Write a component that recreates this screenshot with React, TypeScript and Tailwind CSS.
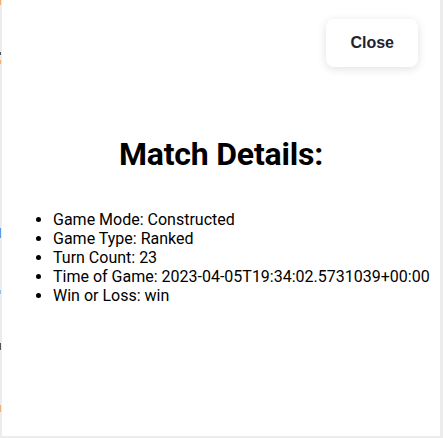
const details = [
  ['Game Mode', 'Constructed'],
  ['Game Type', 'Ranked'],
  ['Turn Count', '23'],
  ['Time of Game', '2023-04-05T19:34:02.5731039+00:00'],
  ['Win or Loss', 'win'],
];

// bits of the page behind the modal that peek out on the left edge
const peeks = [
  { top: 0, h: 5, color: 'bg-[#f0b070]' },
  { top: 52, h: 3, color: 'bg-[#555]' },
  { top: 60, h: 4, color: 'bg-[#f0b070]' },
  { top: 228, h: 10, color: 'bg-[#5b9be0]' },
  { top: 290, h: 4, color: 'bg-[#8cc4f0]' },
  { top: 343, h: 7, color: 'bg-[#555]' },
  { top: 405, h: 7, color: 'bg-[#f0b070]' },
];

export default function App() {
  return (
    <div className="relative flex h-[438px] w-[443px] overflow-hidden bg-[#ececec]">
      {peeks.map((p, i) => (
        <span
          key={i}
          className={`absolute left-0 w-px ${p.color}`}
          style={{ top: p.top, height: p.h }}
        />
      ))}

      <div className="relative ml-[2px] h-[436px] w-[438px] bg-white font-['Roboto',sans-serif] text-black">
        <button className="absolute right-[22px] top-[19px] rounded-lg bg-white px-6 py-[14px] font-['Liberation_Sans',Arial,sans-serif] text-base font-bold leading-5 text-[#1f2330] shadow-[0_2px_10px_rgba(0,0,0,0.12)]">
          Close
        </button>

        <h1 className="mt-[136px] text-center text-[32px] font-bold leading-[37.5px] tracking-[-0.2px]">
          Match Details:
        </h1>

        <ul className="mt-[36px] list-disc pl-[51px] text-base leading-[19px]">
          {details.map(([label, value]) => (
            <li key={label} className="whitespace-nowrap">
              {label}: {value}
            </li>
          ))}
        </ul>
      </div>
    </div>
  );
}
